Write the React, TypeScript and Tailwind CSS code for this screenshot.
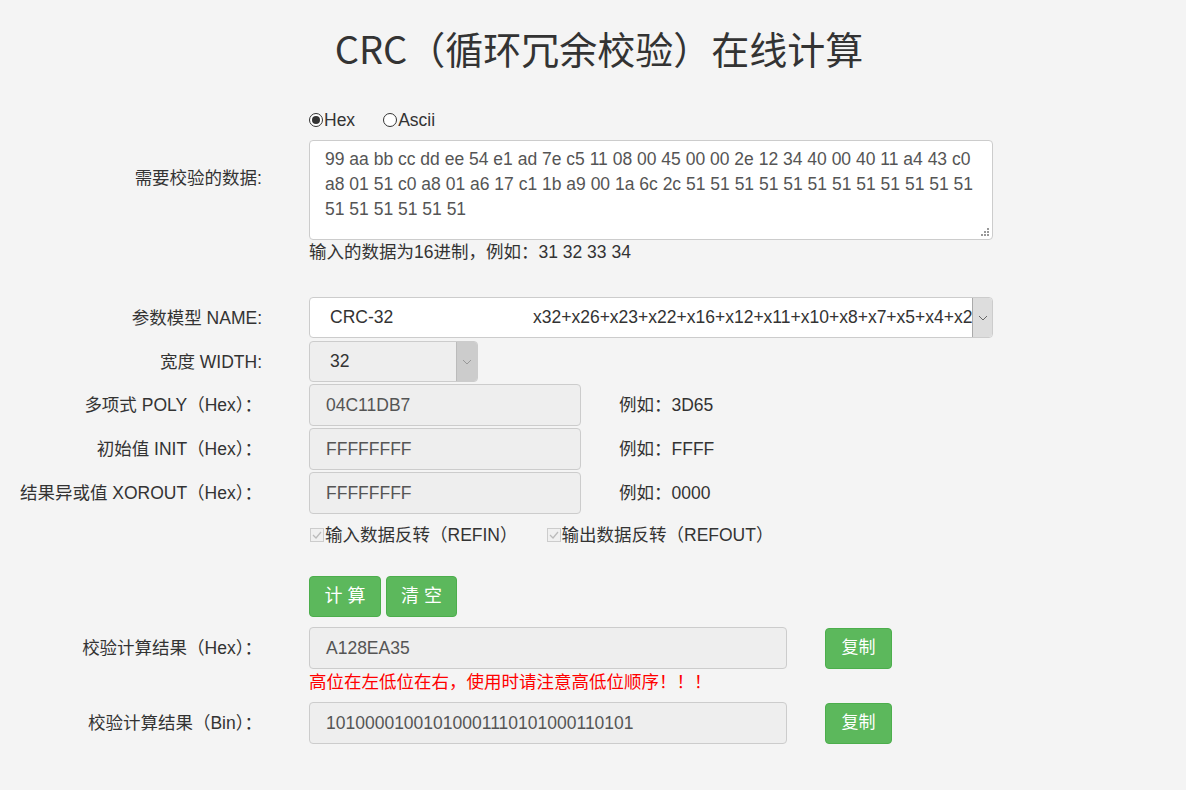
const font = "font-['Liberation_Sans','Noto_Sans_CJK_SC',sans-serif]";

function Label({ children, className = "" }: { children: React.ReactNode; className?: string }) {
  return (
    <div className={`w-[262px] shrink-0 text-right text-[17.5px] leading-[22px] text-[#333] ${className}`}>
      {children}
    </div>
  );
}

function ReadonlyInput({ value, width }: { value: string; width: string }) {
  return (
    <div
      className={`${width} flex h-[42px] items-center rounded-[4px] border border-[#ccc] bg-[#eee] pl-4 text-[17.5px] text-[#555]`}
    >
      {value}
    </div>
  );
}

function Chevron({ color = "#666" }: { color?: string }) {
  return (
    <svg width="10" height="6" viewBox="0 0 10 6" fill="none">
      <path d="M1 1l4 4 4-4" stroke={color} strokeWidth="1" />
    </svg>
  );
}

function CheckBox() {
  return (
    <span className="flex h-[14px] w-[14px] items-center justify-center border border-[#ccc] bg-[#f0f0f0]">
      <svg width="10" height="8" viewBox="0 0 10 8" fill="none">
        <path d="M1 4l3 3 5-6" stroke="#bbb" strokeWidth="1.3" />
      </svg>
    </span>
  );
}

function Radio({ checked }: { checked: boolean }) {
  return (
    <span className="flex h-[14px] w-[14px] items-center justify-center rounded-full border border-[#333] bg-white">
      {checked && <span className="h-[8px] w-[8px] rounded-full bg-[#333]" />}
    </span>
  );
}

function CopyButton() {
  return (
    <button className="ml-[38px] h-[41px] w-[67px] rounded-[4px] border border-[#4cae4c] bg-[#5cb85c] text-[17px] text-white">
      复制
    </button>
  );
}

export default function App() {
  return (
    <div className={`min-h-[790px] w-full bg-[#f4f4f4] ${font} text-[#333]`}>
      <h1 className="pl-[12px] pt-[22px] text-center font-['Noto_Sans_CJK_SC',sans-serif] text-[38px] leading-[52px] text-[#333]">
        CRC（循环冗余校验）在线计算
      </h1>

      <div className="flex flex-col pt-[30px]">
        {/* data */}
        <div className="flex">
          <div className="w-[262px] shrink-0" />
          <div className="ml-[47px] flex h-[32px] items-center gap-[28px] text-[17.5px]">
            <label className="flex items-center">
              <Radio checked />
              <span className="ml-[1px]">Hex</span>
            </label>
            <label className="flex items-center">
              <Radio checked={false} />
              <span className="ml-[1px]">Ascii</span>
            </label>
          </div>
        </div>

        <div className="mt-[4px] flex items-start">
          <Label className="pt-[27px]">需要校验的数据:</Label>
          <div className="ml-[47px] flex flex-col">
            <div className="relative h-[100px] w-[684px] rounded-[4px] border border-[#ccc] bg-white px-[15px] pt-[6px] text-[17.5px] leading-[25px] text-[#555]">
              99 aa bb cc dd ee 54 e1 ad 7e c5 11 08 00 45 00 00 2e 12 34 40 00 40 11 a4 43 c0 a8 01 51 c0 a8 01 a6 17 c1 1b a9 00 1a 6c 2c 51 51 51 51 51 51 51 51 51 51 51 51 51 51 51 51 51 51
              <svg className="absolute bottom-[2px] right-[2px]" width="9" height="9" viewBox="0 0 9 9">
                <rect x="6" y="0" width="2" height="2" fill="#999" />
                <rect x="3" y="3" width="2" height="2" fill="#999" />
                <rect x="6" y="3" width="2" height="2" fill="#999" />
                <rect x="0" y="6" width="2" height="2" fill="#999" />
                <rect x="3" y="6" width="2" height="2" fill="#999" />
                <rect x="6" y="6" width="2" height="2" fill="#999" />
              </svg>
            </div>
            <div className="mt-[1px] text-[17.5px] leading-[22px] text-[#333]">
              输入的数据为16进制，例如：31 32 33 34
            </div>
          </div>
        </div>

        {/* name */}
        <div className="mt-[34px] flex items-center">
          <Label>参数模型 NAME:</Label>
          <div className="ml-[47px] flex h-[41px] w-[684px] overflow-hidden rounded-[4px] border border-[#ccc] bg-white">
            <div className="flex min-w-0 flex-1 items-center overflow-hidden whitespace-nowrap pl-[20px] text-[17.5px] text-[#333]">
              <span className="w-[203px] shrink-0">CRC-32</span>
              <span>x32+x26+x23+x22+x16+x12+x11+x10+x8+x7+x5+x4+x2+x+1</span>
            </div>
            <div className="flex w-[20px] shrink-0 items-center justify-center border-l border-[#aaa] bg-[#ddd]">
              <Chevron />
            </div>
          </div>
        </div>

        {/* width */}
        <div className="mt-[3px] flex items-center">
          <Label>宽度 WIDTH:</Label>
          <div className="ml-[47px] flex h-[41px] w-[169px] overflow-hidden rounded-[4px] border border-[#ccc] bg-[#eee]">
            <div className="flex flex-1 items-center pl-[20px] text-[17.5px] text-[#333]">32</div>
            <div className="flex w-[21px] items-center justify-center border-l border-[#bbb] bg-[#ccc]">
              <Chevron color="#999" />
            </div>
          </div>
        </div>

        {[
          ["多项式 POLY（Hex）：", "04C11DB7", "例如：3D65"],
          ["初始值 INIT（Hex）：", "FFFFFFFF", "例如：FFFF"],
          ["结果异或值 XOROUT（Hex）：", "FFFFFFFF", "例如：0000"],
        ].map(([label, value, hint]) => (
          <div key={label} className="mt-[2px] flex items-center">
            <Label>{label}</Label>
            <div className="ml-[47px] flex items-center">
              <ReadonlyInput value={value} width="w-[272px]" />
              <span className="ml-[38px] text-[17.5px] text-[#333]">{hint}</span>
            </div>
          </div>
        ))}

        {/* reflect */}
        <div className="mt-[9px] flex">
          <div className="w-[262px] shrink-0" />
          <div className="ml-[48px] flex h-[24px] items-center text-[17.5px] text-[#333]">
            <label className="flex items-center">
              <CheckBox />
              <span className="ml-[1px]">输入数据反转（REFIN）</span>
            </label>
            <label className="ml-[29px] flex items-center">
              <CheckBox />
              <span className="ml-[1px]">输出数据反转（REFOUT）</span>
            </label>
          </div>
        </div>

        {/* buttons */}
        <div className="mt-[29px] flex">
          <div className="w-[262px] shrink-0" />
          <div className="ml-[47px] flex gap-[5px]">
            <button className="h-[41px] w-[72px] rounded-[4px] border border-[#4cae4c] bg-[#5cb85c] pl-[5px] text-[18px] tracking-[5px] text-white">
              计算
            </button>
            <button className="h-[41px] w-[71px] rounded-[4px] border border-[#4cae4c] bg-[#5cb85c] pl-[5px] text-[18px] tracking-[5px] text-white">
              清空
            </button>
          </div>
        </div>

        {/* result hex */}
        <div className="mt-[10px] flex items-start">
          <Label className="pt-[10px]">校验计算结果（Hex）：</Label>
          <div className="ml-[47px] flex flex-col">
            <div className="flex items-center">
              <ReadonlyInput value="A128EA35" width="w-[478px]" />
              <CopyButton />
            </div>
            <div className="mt-[2px] text-[17.5px] leading-[22px] text-[#ff0000]">
              高位在左低位在右，使用时请注意高低位顺序！！！
            </div>
          </div>
        </div>
        <div className="mt-[9px] flex items-center">
          <Label>校验计算结果（Bin）：</Label>
          <div className="ml-[47px] flex items-center">
            <ReadonlyInput value="10100001001010001110101000110101" width="w-[478px]" />
            <CopyButton />
          </div>
        </div>
      </div>
    </div>
  );
}
